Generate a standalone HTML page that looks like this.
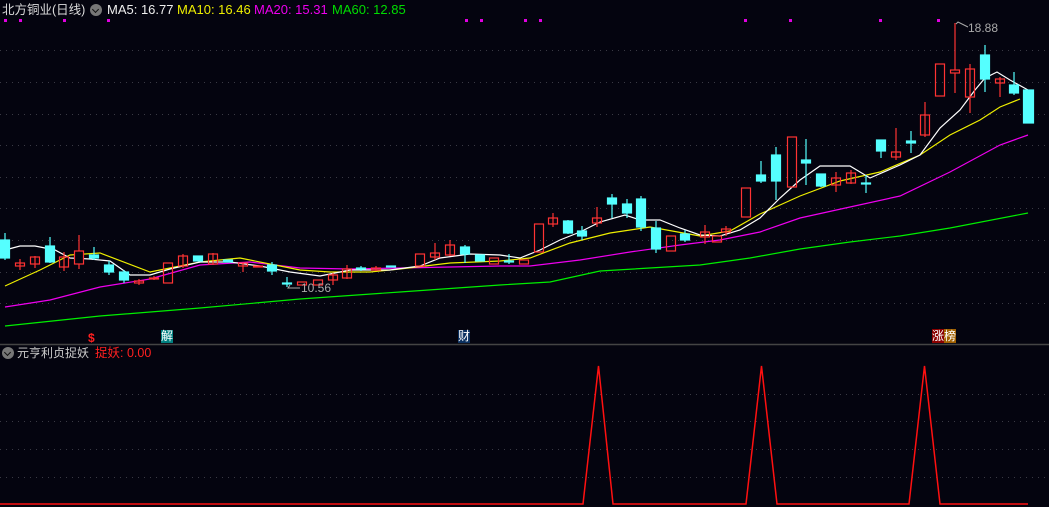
<!DOCTYPE html>
<html><head><meta charset="utf-8"><style>
html,body{margin:0;padding:0;background:#04040f;}
body{width:1049px;height:507px;overflow:hidden;position:relative;font-family:"Liberation Sans","Noto Sans CJK SC",sans-serif;}
.t{position:absolute;font-size:13px;white-space:nowrap;line-height:16px;}
.ic{display:inline-block;width:12px;height:12px;border-radius:50%;background:#777;vertical-align:-2px;position:relative;}
.ic:after{content:"";position:absolute;left:3px;top:3px;width:4px;height:4px;border-right:1.5px solid #111;border-bottom:1.5px solid #111;transform:rotate(45deg);}
</style></head><body>
<svg width="1049" height="507" style="position:absolute;left:0;top:0">
<g stroke="#3a3a44" stroke-dasharray="1,5" stroke-width="1">
<line x1="0" y1="50.5" x2="1049" y2="50.5"/><line x1="0" y1="82.5" x2="1049" y2="82.5"/><line x1="0" y1="114.5" x2="1049" y2="114.5"/><line x1="0" y1="145.5" x2="1049" y2="145.5"/><line x1="0" y1="177.5" x2="1049" y2="177.5"/><line x1="0" y1="208.5" x2="1049" y2="208.5"/><line x1="0" y1="240.5" x2="1049" y2="240.5"/><line x1="0" y1="272.5" x2="1049" y2="272.5"/><line x1="0" y1="303.5" x2="1049" y2="303.5"/>
<line x1="0" y1="394.5" x2="1049" y2="394.5"/><line x1="0" y1="421.5" x2="1049" y2="421.5"/><line x1="0" y1="449.5" x2="1049" y2="449.5"/><line x1="0" y1="477.5" x2="1049" y2="477.5"/>
</g>
<line x1="0" y1="344.5" x2="1049" y2="344.5" stroke="#444" stroke-width="1.5"/>
<g fill="#e000e0">
<rect x="4" y="19" width="3" height="3"/><rect x="19" y="19" width="3" height="3"/><rect x="63" y="19" width="3" height="3"/><rect x="107" y="19" width="3" height="3"/><rect x="465" y="19" width="3" height="3"/><rect x="480" y="19" width="3" height="3"/><rect x="524" y="19" width="3" height="3"/><rect x="539" y="19" width="3" height="3"/><rect x="744" y="19" width="3" height="3"/><rect x="789" y="19" width="3" height="3"/><rect x="879" y="19" width="3" height="3"/><rect x="937" y="19" width="3" height="3"/>
</g>
<g fill="none" stroke-width="1.2">
<polyline stroke="#00ee00" points="5,326 100,316 200,308 300,299 400,292 500,285 550,282 600,271 700,265 750,258 800,249 850,242 900,236 950,228 1028,213"/>
<polyline stroke="#ee00ee" points="5,307 50,300 100,287 150,279 200,265 250,262 300,268 350,269 400,268 450,267 500,266 530,266 580,260 630,252 680,245 720,240 760,232 800,218 850,207 900,196 950,172 1000,145 1028,135"/>
<polyline stroke="#eeee00" points="5,286 40,270 70,255 100,253 150,272 200,262 240,258 280,266 300,270 330,272 370,272 400,269 450,263 500,261 530,258 570,243 610,233 650,227 700,236 730,231 760,214 800,196 840,181 880,172 920,155 950,135 980,120 1000,107 1020,99"/>
<polyline stroke="#ffffff" points="5,250 20,246 35,246 55,250 70,258 90,259 110,261 130,275 150,275 170,269 200,262 230,262 260,266 290,272 320,276 350,270 390,270 420,266 440,258 470,254 500,255 520,258 540,250 560,240 580,232 600,222 625,215 640,220 660,220 680,228 700,235 720,236 740,230 760,218 780,198 800,180 820,166 850,166 870,178 900,165 920,155 940,128 960,110 975,90 985,78 997,72 1010,80 1028,90"/>
</g>
<g stroke="#ff3333" fill="none" stroke-width="1.2">
<line x1="20" y1="259" x2="20" y2="270"/><rect x="15.5" y="263" width="9" height="3"/>
<line x1="35" y1="256" x2="35" y2="268"/><rect x="30.5" y="257" width="9" height="7"/>
<line x1="64" y1="252" x2="64" y2="271"/><rect x="59.5" y="257" width="9" height="10"/>
<line x1="79" y1="235" x2="79" y2="269"/><rect x="74.5" y="251" width="9" height="13" fill="#04040f"/>
<line x1="139" y1="279" x2="139" y2="285"/><rect x="134.5" y="281" width="9" height="2"/>
<line x1="154" y1="276" x2="154" y2="280"/><rect x="149.5" y="278" width="9" height="1"/>
<rect x="163.5" y="263" width="9" height="20"/>
<line x1="183" y1="254" x2="183" y2="268"/><rect x="178.5" y="256" width="9" height="10"/>
<line x1="213" y1="253" x2="213" y2="265"/><rect x="208.5" y="254" width="9" height="10"/>
<line x1="243" y1="263" x2="243" y2="272"/><rect x="238.5" y="263" width="9" height="3"/>
<rect x="253.5" y="266" width="9" height="1"/>
<rect x="297.5" y="282" width="9" height="3"/>
<rect x="313.5" y="280" width="9" height="5"/>
<line x1="333" y1="273" x2="333" y2="285"/><rect x="328.5" y="275" width="9" height="5"/>
<line x1="347" y1="265" x2="347" y2="279"/><rect x="342.5" y="269" width="9" height="9"/>
<line x1="376" y1="266" x2="376" y2="271"/><rect x="371.5" y="268" width="9" height="2"/>
<rect x="415.5" y="254" width="9" height="12"/>
<line x1="435" y1="243" x2="435" y2="260"/><rect x="430.5" y="253" width="9" height="4"/>
<line x1="450" y1="240" x2="450" y2="256"/><rect x="445.5" y="245" width="9" height="10"/>
<rect x="489.5" y="258" width="9" height="6"/>
<rect x="519.5" y="260" width="9" height="4"/>
<rect x="534.5" y="224" width="9" height="28"/>
<line x1="553" y1="213" x2="553" y2="227"/><rect x="548.5" y="218" width="9" height="6"/>
<line x1="597" y1="207" x2="597" y2="227"/><rect x="592.5" y="218" width="9" height="5"/>
<rect x="666.5" y="236" width="9" height="15"/>
<line x1="705" y1="225" x2="705" y2="244"/><rect x="700.5" y="232" width="9" height="5"/>
<rect x="712.5" y="236" width="9" height="6"/>
<line x1="726" y1="226" x2="726" y2="236"/><rect x="721.5" y="229" width="9" height="3"/>
<rect x="741.5" y="188" width="9" height="29"/>
<rect x="787.5" y="137" width="9" height="50"/>
<line x1="836" y1="172" x2="836" y2="192"/><rect x="831.5" y="178" width="9" height="7"/>
<line x1="851" y1="170" x2="851" y2="184"/><rect x="846.5" y="173" width="9" height="10"/>
<line x1="896" y1="128" x2="896" y2="160"/><rect x="891.5" y="152" width="9" height="5"/>
<line x1="925" y1="102" x2="925" y2="137"/><rect x="920.5" y="115" width="9" height="20"/>
<rect x="935.5" y="64" width="9" height="32"/>
<line x1="955" y1="23" x2="955" y2="93"/><rect x="950.5" y="70" width="9" height="3" fill="#04040f"/>
<line x1="970" y1="64" x2="970" y2="113"/><rect x="965.5" y="69" width="9" height="28"/>
<line x1="1000" y1="77" x2="1000" y2="97"/><rect x="995.5" y="79" width="9" height="4"/>
</g>
<g stroke="#55ffff" fill="#55ffff" stroke-width="1.2">
<line x1="5" y1="233" x2="5" y2="260"/><rect x="0.5" y="240" width="9" height="18"/>
<line x1="50" y1="237" x2="50" y2="263"/><rect x="45.5" y="246" width="9" height="16"/>
<line x1="94" y1="247" x2="94" y2="260"/><rect x="89.5" y="255" width="9" height="3"/>
<line x1="109" y1="261" x2="109" y2="275"/><rect x="104.5" y="265" width="9" height="7"/>
<line x1="124" y1="270" x2="124" y2="283"/><rect x="119.5" y="272" width="9" height="8"/>
<rect x="193.5" y="256" width="9" height="5"/>
<rect x="223.5" y="260" width="9" height="2"/>
<line x1="272" y1="262" x2="272" y2="275"/><rect x="267.5" y="265" width="9" height="6"/>
<line x1="287" y1="277" x2="287" y2="287"/><rect x="282.5" y="283" width="9" height="1"/>
<line x1="361" y1="266" x2="361" y2="271"/><rect x="356.5" y="268" width="9" height="1"/>
<rect x="386.5" y="266" width="9" height="1"/>
<line x1="465" y1="245" x2="465" y2="263"/><rect x="460.5" y="247" width="9" height="7"/>
<rect x="475.5" y="255" width="9" height="6"/>
<line x1="509" y1="254" x2="509" y2="264"/><rect x="504.5" y="261" width="9" height="1"/>
<line x1="568" y1="220" x2="568" y2="234"/><rect x="563.5" y="221" width="9" height="12"/>
<line x1="582" y1="226" x2="582" y2="240"/><rect x="577.5" y="231" width="9" height="5"/>
<line x1="612" y1="194" x2="612" y2="218"/><rect x="607.5" y="198" width="9" height="6"/>
<line x1="627" y1="199" x2="627" y2="218"/><rect x="622.5" y="204" width="9" height="9"/>
<line x1="641" y1="196" x2="641" y2="231"/><rect x="636.5" y="199" width="9" height="28"/>
<line x1="656" y1="221" x2="656" y2="253"/><rect x="651.5" y="228" width="9" height="21"/>
<line x1="685" y1="230" x2="685" y2="242"/><rect x="680.5" y="234" width="9" height="6"/>
<line x1="761" y1="161" x2="761" y2="183"/><rect x="756.5" y="175" width="9" height="6"/>
<line x1="776" y1="147" x2="776" y2="200"/><rect x="771.5" y="155" width="9" height="26"/>
<line x1="806" y1="139" x2="806" y2="185"/><rect x="801.5" y="160" width="9" height="3"/>
<line x1="821" y1="174" x2="821" y2="187"/><rect x="816.5" y="174" width="9" height="12"/>
<line x1="866" y1="175" x2="866" y2="193"/><rect x="861.5" y="183" width="9" height="1"/>
<line x1="881" y1="140" x2="881" y2="158"/><rect x="876.5" y="140" width="9" height="11"/>
<line x1="911" y1="131" x2="911" y2="153"/><rect x="906.5" y="141" width="9" height="2"/>
<line x1="985" y1="45" x2="985" y2="92"/><rect x="980.5" y="55" width="9" height="24"/>
<line x1="1014" y1="72" x2="1014" y2="95"/><rect x="1009.5" y="85" width="9" height="8"/>
<rect x="1023.5" y="90" width="10" height="33"/>
</g>
<polyline points="956,24 958,22 968,27" fill="none" stroke="#aaa" stroke-width="1"/>
<polyline points="290,285 288,288 300,288" fill="none" stroke="#aaa" stroke-width="1"/>
<polyline fill="none" stroke="#ff1010" stroke-width="1.5" points="0,504 583,504 598.5,366 613,504 746,504 761.5,366 777,504 909,504 924.5,366 940,504 1028,504"/>
</svg>
<div class="t" style="left:2px;top:2px;color:#ddd;font-size:12.5px">北方铜业(日线)</div>
<div class="t" style="left:90px;top:2px"><span class="ic"></span></div>
<div class="t" style="left:107px;top:2px;color:#eee">MA5: 16.77</div>
<div class="t" style="left:177px;top:2px;color:#eeee00">MA10: 16.46</div>
<div class="t" style="left:254px;top:2px;color:#ee00ee">MA20: 15.31</div>
<div class="t" style="left:332px;top:2px;color:#00dd00">MA60: 12.85</div>
<div class="t" style="left:968px;top:20px;color:#aaa;font-size:12px">18.88</div>
<div class="t" style="left:301px;top:280px;color:#aaa;font-size:12px">10.56</div>
<div class="t" style="left:88px;top:330px;color:#ff2020;font-size:12px;font-weight:bold">$</div>
<div class="t" style="left:161px;top:330px;color:#fff;background:#008080;font-size:12px;line-height:13px">解</div>
<div class="t" style="left:458px;top:330px;color:#fff;background:#0a3060;font-size:12px;line-height:13px">财</div>
<div class="t" style="left:932px;top:330px;font-size:12px;line-height:13px"><span style="background:#8a0000;color:#fff">涨</span><span style="background:#a06000;color:#fff">榜</span></div>
<div class="t" style="left:2px;top:345px"><span class="ic"></span></div>
<div class="t" style="left:17px;top:345px;color:#ccc;font-size:12px">元亨利贞捉妖</div>
<div class="t" style="left:95px;top:345px;color:#ff2020;font-size:12.5px">捉妖: 0.00</div>
</body></html>
